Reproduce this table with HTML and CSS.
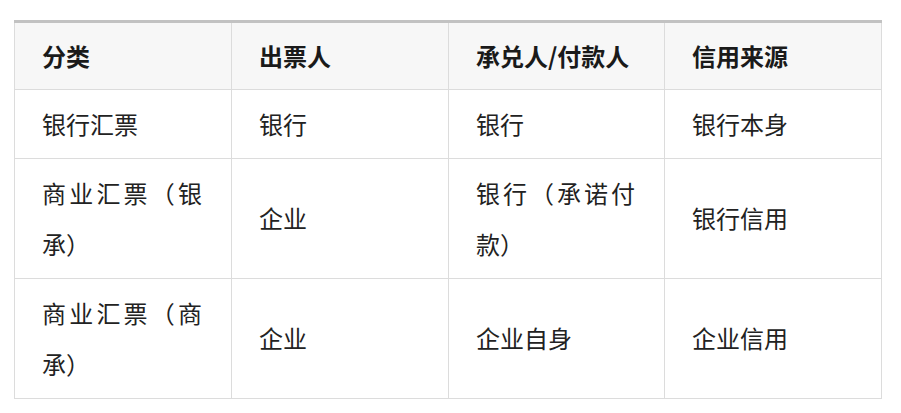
FILE: index.html
```html
<!DOCTYPE html>
<html lang="zh-CN">
<head>
<meta charset="utf-8">
<title>汇票分类</title>
<link rel="stylesheet" href="styles.css">
</head>
<body>
<div class="page">
  <table class="bill-table">
    <colgroup>
      <col class="c1"><col class="c2"><col class="c3"><col class="c4">
    </colgroup>
    <thead>
      <tr><th>分类</th><th>出票人</th><th>承兑人/付款人</th><th>信用来源</th></tr>
    </thead>
    <tbody>
      <tr><td>银行汇票</td><td>银行</td><td>银行</td><td>银行本身</td></tr>
      <tr><td>商业汇票（银承）</td><td>企业</td><td>银行（承诺付款）</td><td>银行信用</td></tr>
      <tr><td>商业汇票（商承）</td><td>企业</td><td>企业自身</td><td>企业信用</td></tr>
    </tbody>
  </table>
</div>
</body>
</html>
```

FILE: styles.css
```css
html, body {
  margin: 0;
  padding: 0;
  background: #ffffff;
}
.page {
  padding: 20px 20px 0 14px;
  font-family: "Noto Sans CJK SC", "Noto Sans", sans-serif;
  color: #222222;
}
.bill-table {
  width: 867px;
  border-collapse: collapse;
  table-layout: fixed;
  border-top: 3px solid #c2c2c2;
}
.c1 { width: 217px; }
.c2 { width: 217px; }
.c3 { width: 216px; }
.c4 { width: 217px; }
.bill-table th,
.bill-table td {
  border: 1px solid #dcdcdc;
  padding: 8px 29px 8px 27px;
  font-size: 24px;
  line-height: 51.5px;
  text-align: justify;
  vertical-align: middle;
}
.bill-table thead th {
  border-top: 0;
  background: #f7f7f7;
  font-weight: 700;
  color: #1a1a1a;
  text-align: left;
  line-height: 50px;
}
```
